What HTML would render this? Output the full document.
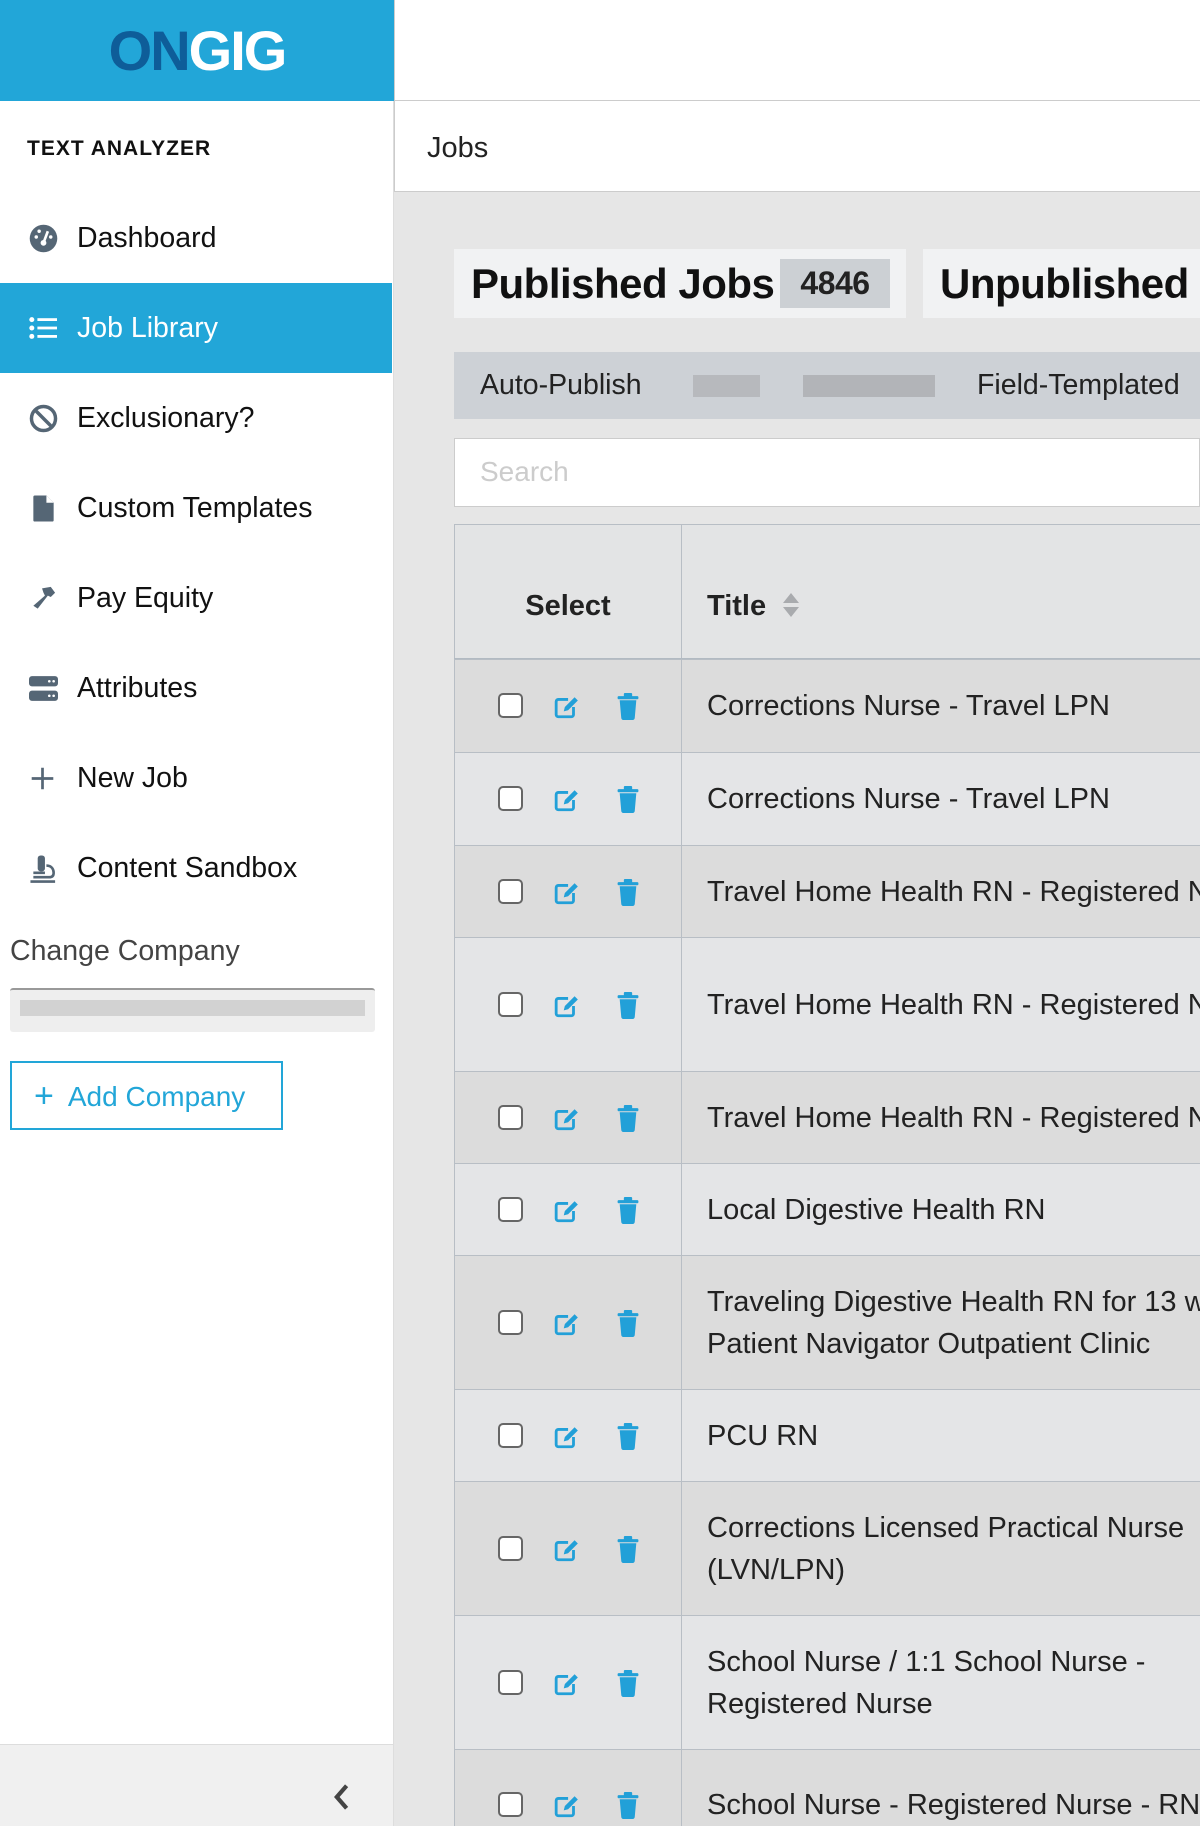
<!DOCTYPE html>
<html><head><meta charset="utf-8"><style>
*{box-sizing:border-box;margin:0;padding:0}
html,body{width:1200px;height:1826px;overflow:hidden}
body{font-family:"Liberation Sans",sans-serif;background:#e6e6e6;color:#222}
#wrap{position:relative;width:1200px;height:1826px;overflow:hidden}
.abs{position:absolute}
#logo{left:0;top:0;width:394px;height:101px;background:#22a6d8;text-align:center;font:bold 56px/101px "Liberation Sans",sans-serif;letter-spacing:-2px}
#top{left:394px;top:0;width:806px;height:101px;background:#fff;border-bottom:1px solid #ccc;border-left:1px solid #ccc}
#side{left:0;top:101px;width:394px;height:1725px;background:#fff;border-right:1px solid #ddd;overflow:hidden}
.nav{position:absolute;left:0;width:392px;height:90px;display:flex;align-items:center;font-size:28.5px;color:#111}
.nav svg{position:absolute;left:29px}
.nav span{position:absolute;left:77px}
.nav.act{background:#22a6d8;color:#fff}
#jobs{left:394px;top:101px;width:806px;height:91px;background:#fff;border-bottom:1px solid #ccc;border-left:1px solid #ccc;font-size:29px;padding:31px 0 0 32px}
.tab{background:#f1f2f3;height:69px;top:249px;font:bold 42px/69px "Liberation Sans",sans-serif;color:#111;padding-left:17px;letter-spacing:-0.5px;overflow:hidden;white-space:nowrap}
.badge{position:absolute;left:326px;top:10px;width:110px;height:49px;background:#ccd0d4;font:bold 32px/49px "Liberation Sans",sans-serif;text-align:center;color:#222}
#filt{left:454px;top:352px;width:746px;height:67px;background:#cdd1d6;font-size:28.5px;line-height:67px;color:#222}
#search{left:454px;top:438px;width:746px;height:69px;background:#fff;border:1px solid #ccc;font-size:28px;color:#ccc;padding:17px 0 0 25px}
.tw{position:absolute;left:454px;width:746px;overflow:hidden}
table{border-collapse:collapse;width:900px}
td,th{border:1.5px solid #b8bec5;font-size:29px}
th{height:135px;text-align:left;vertical-align:middle;padding-top:30px;font-weight:bold;background:#e3e4e5;border-bottom:3px solid #b2bac2}
td.s{width:227px;position:relative}
td.t{padding-left:25px;line-height:42px;color:#222;white-space:nowrap}
tr.o td{background:#dcdcdc}
tr.e td{background:#e4e5e7}
.cb{position:absolute;left:43px;top:50%;margin-top:-13px;width:25px;height:25px;border:2px solid #666;border-radius:5px;background:#fff}
.ed{position:absolute;left:99px;top:50%;margin-top:-12px}
.tr{position:absolute;left:161px;top:50%;margin-top:-13px}
</style></head><body><div id="wrap">
<div id="logo" class="abs"><span style="color:#0e5d99">ON</span><span style="color:#fff">GIG</span></div>
<div id="top" class="abs"></div>
<div id="side" class="abs">
<div class="abs" style="left:27px;top:36px;font:bold 21px 'Liberation Sans',sans-serif;letter-spacing:1px;color:#111">TEXT ANALYZER</div>
<div class="nav" style="top:92px"><svg width="29" height="29" viewBox="0 0 20 20"><circle cx="10" cy="10" r="9.5" fill="#556675"/><circle cx="10" cy="13" r="2" fill="#fff"/><path d="M10 13L13 5" stroke="#fff" stroke-width="1.8"/><circle cx="5" cy="9" r="1.2" fill="#fff"/><circle cx="7" cy="5" r="1.2" fill="#fff"/><circle cx="15" cy="9" r="1.2" fill="#fff"/></svg><span>Dashboard</span></div>
<div class="nav act" style="top:182px"><svg width="28" height="24" viewBox="0 0 20 16"><g fill="#fff"><circle cx="2" cy="2" r="1.8"/><circle cx="2" cy="8" r="1.8"/><circle cx="2" cy="14" r="1.8"/><rect x="6" y="1" width="14" height="2"/><rect x="6" y="7" width="14" height="2"/><rect x="6" y="13" width="14" height="2"/></g></svg><span>Job Library</span></div>
<div class="nav" style="top:272px"><svg width="29" height="29" viewBox="0 0 20 20"><circle cx="10" cy="10" r="8.3" fill="none" stroke="#556675" stroke-width="2.4"/><path d="M4.5 4.5L15.5 15.5" stroke="#556675" stroke-width="2.4"/></svg><span>Exclusionary?</span></div>
<div class="nav" style="top:362px"><svg width="29" height="29" viewBox="0 0 20 20"><path d="M4 1h8l5 5v12a1 1 0 0 1-1 1H4a1 1 0 0 1-1-1V2a1 1 0 0 1 1-1z" fill="#556675"/><path d="M12 1v5h5" fill="#fff"/></svg><span>Custom Templates</span></div>
<div class="nav" style="top:452px"><svg width="29" height="29" viewBox="0 0 20 20"><path d="M9 3l6-1 3 4-3 3-2-1-7 9-3-2 8-7-1-2z" fill="#556675"/></svg><span>Pay Equity</span></div>
<div class="nav" style="top:542px"><svg width="29" height="25" viewBox="0 0 20 17"><rect x="0" y="0" width="20" height="7" rx="2" fill="#556675"/><rect x="0" y="10" width="20" height="7" rx="2" fill="#556675"/><g fill="#fff"><circle cx="14" cy="3.5" r=".9"/><circle cx="17" cy="3.5" r=".9"/><circle cx="14" cy="13.5" r=".9"/><circle cx="17" cy="13.5" r=".9"/></g></svg><span>Attributes</span></div>
<div class="nav" style="top:632px"><svg width="27" height="27" viewBox="0 0 20 20"><path d="M10 2v16M2 10h16" stroke="#556675" stroke-width="2"/></svg><span>New Job</span></div>
<div class="nav" style="top:722px"><svg width="29" height="29" viewBox="0 0 20 20"><rect x="6" y="1" width="5" height="11" rx="2" fill="#556675"/><path d="M3 13h8M12 8c4 0 5 3 5 5s-1 3-3 3H3M1 19h17" stroke="#556675" stroke-width="1.8" fill="none"/></svg><span>Content Sandbox</span></div>
<div class="abs" style="left:10px;top:834px;font-size:28.5px;color:#444">Change Company</div>
<div class="abs" style="left:10px;top:887px;width:365px;height:44px;background:#eee;border-top:2px solid #999;border-radius:3px"><div style="margin:10px 10px;height:16px;background:#d2d2d2"></div></div>
<div class="abs" style="left:10px;top:960px;width:273px;height:69px;border:2px solid #22a6d8;color:#22a6d8;font-size:28px;line-height:65px;padding-left:22px"><span style="font-size:34px;position:relative;top:1px">+</span>&nbsp; Add Company</div>
<div class="abs" style="left:0;top:1643px;width:393px;height:82px;background:#f0f0f0;border-top:1px solid #ddd"><svg class="abs" style="left:332px;top:38px" width="18" height="28" viewBox="0 0 12 20"><path d="M10 2L3 10l7 8" stroke="#444" stroke-width="3" fill="none"/></svg></div>
</div>
<div id="jobs" class="abs">Jobs</div>
<div class="abs tab" style="left:454px;width:452px">Published Jobs<div class="badge">4846</div></div>
<div class="abs tab" style="left:923px;width:277px">Unpublished</div>
<div id="filt" class="abs"><span class="abs" style="left:26px">Auto-Publish</span><span class="abs" style="left:239px;top:23px;width:67px;height:22px;background:#b7b9bd"></span><span class="abs" style="left:349px;top:23px;width:132px;height:22px;background:#b2b4b8"></span><span class="abs" style="left:523px">Field-Templated</span></div>
<div id="search" class="abs">Search</div>
<div class="tw" style="top:524px;height:136px">
<table>
<tr><th style="text-align:center;width:227px">Select</th><th style="padding-left:25px">Title <svg width="18" height="26" viewBox="0 0 18 26" style="vertical-align:-3px;margin-left:8px"><path d="M9 1L17 11H1z M9 25L17 15H1z" fill="#a9abae"/></svg></th></tr>
</table></div>
<div class="tw" id="rows" style="top:659px;height:1167px"></div>
<script>
var d=[["Corrections Nurse - Travel LPN",93],["Corrections Nurse - Travel LPN",93],["Travel Home Health RN - Registered Nurse",92],["Travel Home Health RN - Registered Nurse",134],["Travel Home Health RN - Registered Nurse",92],["Local Digestive Health RN",92],["Traveling Digestive Health RN for 13 weeks<br>Patient Navigator Outpatient Clinic",134],["PCU RN",92],["Corrections Licensed Practical Nurse<br>(LVN/LPN)",134],["School Nurse / 1:1 School Nurse -<br>Registered Nurse",134],["School Nurse - Registered Nurse - RN",110]];
var ed='<svg width="26" height="24" viewBox="0 0 24 22"><path d="M13 4H4a2 2 0 0 0-2 2v12a2 2 0 0 0 2 2h12a2 2 0 0 0 2-2v-7" stroke="#22a0d8" stroke-width="2.6" fill="none"/><path d="M9 15l1-4 9-9 3 3-9 9z" fill="#22a0d8"/></svg>';
var tr='<svg width="24" height="27" viewBox="0 0 22 26"><rect x="1" y="3" width="20" height="3" rx="1" fill="#22a0d8"/><rect x="7" y="0" width="8" height="4" rx="1" fill="#22a0d8"/><path d="M3 7h16l-1.5 17a2 2 0 0 1-2 2h-9a2 2 0 0 1-2-2z" fill="#22a0d8"/></svg>';
var h='<table>';
d.forEach(function(r,i){h+='<tr class="'+(i%2?'e':'o')+'" style="height:'+r[1]+'px"><td class="s"><div class="cb"></div><div class="ed">'+ed+'</div><div class="tr">'+tr+'</div></td><td class="t">'+r[0]+'</td></tr>';});
document.getElementById('rows').innerHTML=h+'</table>';
</script>
</div></body></html>
